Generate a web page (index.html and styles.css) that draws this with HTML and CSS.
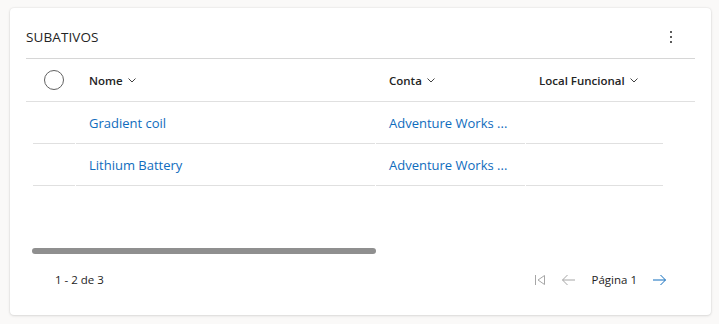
FILE: index.html
```html
<!DOCTYPE html>
<html lang="pt">
<head>
  <meta charset="UTF-8">
  <title>Subativos</title>
  <link rel="stylesheet" href="styles.css">
</head>
<body>

<div class="card">
  <div class="cardHeader">
    <h2 class="cardTitle">SUBATIVOS</h2>
    <span class="moreBtn">
      <svg width="4" height="14" viewBox="0 0 4 14"><circle cx="2" cy="2" r="1" fill="#242424"/><circle cx="2" cy="7" r="1" fill="#242424"/><circle cx="2" cy="12" r="1" fill="#242424"/></svg>
    </span>
  </div>

  <div class="grid">
    <div class="headRow">
      <div class="cell checkCell"><span class="circle"></span></div>
      <div class="cell headCell">Nome <svg class="chev" width="8" height="5" viewBox="0 0 8 5"><path d="M0.5 0.5 L4 4 L7.5 0.5" fill="none" stroke="#424242" stroke-width="1"/></svg></div>
      <div class="cell headCell">Conta <svg class="chev" width="8" height="5" viewBox="0 0 8 5"><path d="M0.5 0.5 L4 4 L7.5 0.5" fill="none" stroke="#424242" stroke-width="1"/></svg></div>
      <div class="cell headCell">Local Funcional <svg class="chev" width="8" height="5" viewBox="0 0 8 5"><path d="M0.5 0.5 L4 4 L7.5 0.5" fill="none" stroke="#424242" stroke-width="1"/></svg></div>
    </div>

    <div class="row">
      <div class="cell"></div>
      <div class="cell"><a class="link" href="#">Gradient coil</a></div>
      <div class="cell"><a class="link" href="#">Adventure Works ...</a></div>
      <div class="cell"></div>
    </div>
    <div class="row">
      <div class="cell"></div>
      <div class="cell"><a class="link" href="#">Lithium Battery</a></div>
      <div class="cell"><a class="link" href="#">Adventure Works ...</a></div>
      <div class="cell"></div>
    </div>
  </div>

  <div class="scrollTrack"><div class="scrollThumb"></div></div>

  <div class="footer">
    <span class="count">1 - 2 de 3</span>
    <div class="pager">
      <svg class="pIcon" width="12" height="12" viewBox="0 0 12 12"><path d="M1.5 1 V11" stroke="#a6a6a6" stroke-width="1" fill="none"/><path d="M10.5 1.5 L4 6 L10.5 10.5 Z" stroke="#a6a6a6" stroke-width="1" fill="none" stroke-linejoin="round"/></svg>
      <svg class="pIcon" width="15" height="12" viewBox="0 0 15 12"><path d="M14 6 H1.5 M6.5 1 L1.5 6 L6.5 11" stroke="#a6a6a6" stroke-width="1" fill="none"/></svg>
      <span class="page">Página 1</span>
      <svg class="pIcon" width="15" height="12" viewBox="0 0 15 12"><path d="M1 6 H13.5 M8.5 1 L13.5 6 L8.5 11" stroke="#0f6cbd" stroke-width="1" fill="none"/></svg>
    </div>
  </div>
</div>

</body>
</html>
```

FILE: styles.css
```css
body {
  margin: 0;
  padding: 8px 8px 9px 10px;
  background-color: #faf9f8;
  font-family: "Open Sans", "Noto Sans", sans-serif;
  color: #242424;
}
.card {
  width: 701px;
  height: 307px;
  background: #fff;
  border-radius: 4px;
  box-shadow: 0 0 2px rgba(0, 0, 0, 0.12), 0 1px 3px rgba(0, 0, 0, 0.1);
  box-sizing: border-box;
  padding: 0 16px;
  display: flex;
  flex-direction: column;
}
.cardHeader {
  height: 51px;
  display: flex;
  align-items: center;
  justify-content: space-between;
  border-bottom: 1px solid #d6d6d6;
  box-sizing: border-box;
  padding-top: 8px;
}
.cardTitle {
  margin: 0;
  font-size: 13.5px;
  font-weight: 400;
  letter-spacing: 0.1px;
}
.moreBtn {
  display: flex;
  margin-right: 22px;
}
.headRow, .row {
  display: grid;
  grid-template-columns: 42px 299px 149px 137px;
  column-gap: 1px;
}
.headRow {
  height: 43px;
  padding-left: 7px;
  border-bottom: 1px solid #e0e0e0;
  box-sizing: border-box;
}
.row {
  height: 42px;
  padding-left: 7px;
}
.row .cell {
  border-bottom: 1px solid #e0e0e0;
}
.cell {
  display: flex;
  align-items: center;
  padding-left: 13px;
  box-sizing: border-box;
}
.checkCell {
  padding-left: 0;
  justify-content: center;
}
.circle {
  width: 18px;
  height: 18px;
  border: 1px solid #616161;
  border-radius: 50%;
}
.headCell {
  font-size: 11.5px;
  font-weight: 600;
}
.chev {
  margin-left: 5px;
}
.link {
  color: #0f6cbd;
  text-decoration: none;
  font-size: 13px;
}
.scrollTrack {
  margin-top: 62px;
  padding-left: 6px;
}
.scrollThumb {
  width: 344px;
  height: 6px;
  border-radius: 3px;
  background: #8f8f8f;
}
.footer {
  display: flex;
  justify-content: space-between;
  align-items: center;
  margin-top: 18px;
  padding: 0 28px 0 29px;
  font-size: 11.5px;
}
.pager {
  display: flex;
  align-items: center;
}
.pIcon {
  margin-left: 15px;
}
.pIcon:first-child {
  margin-left: 0;
}
.page {
  margin-left: 16px;
}
```
